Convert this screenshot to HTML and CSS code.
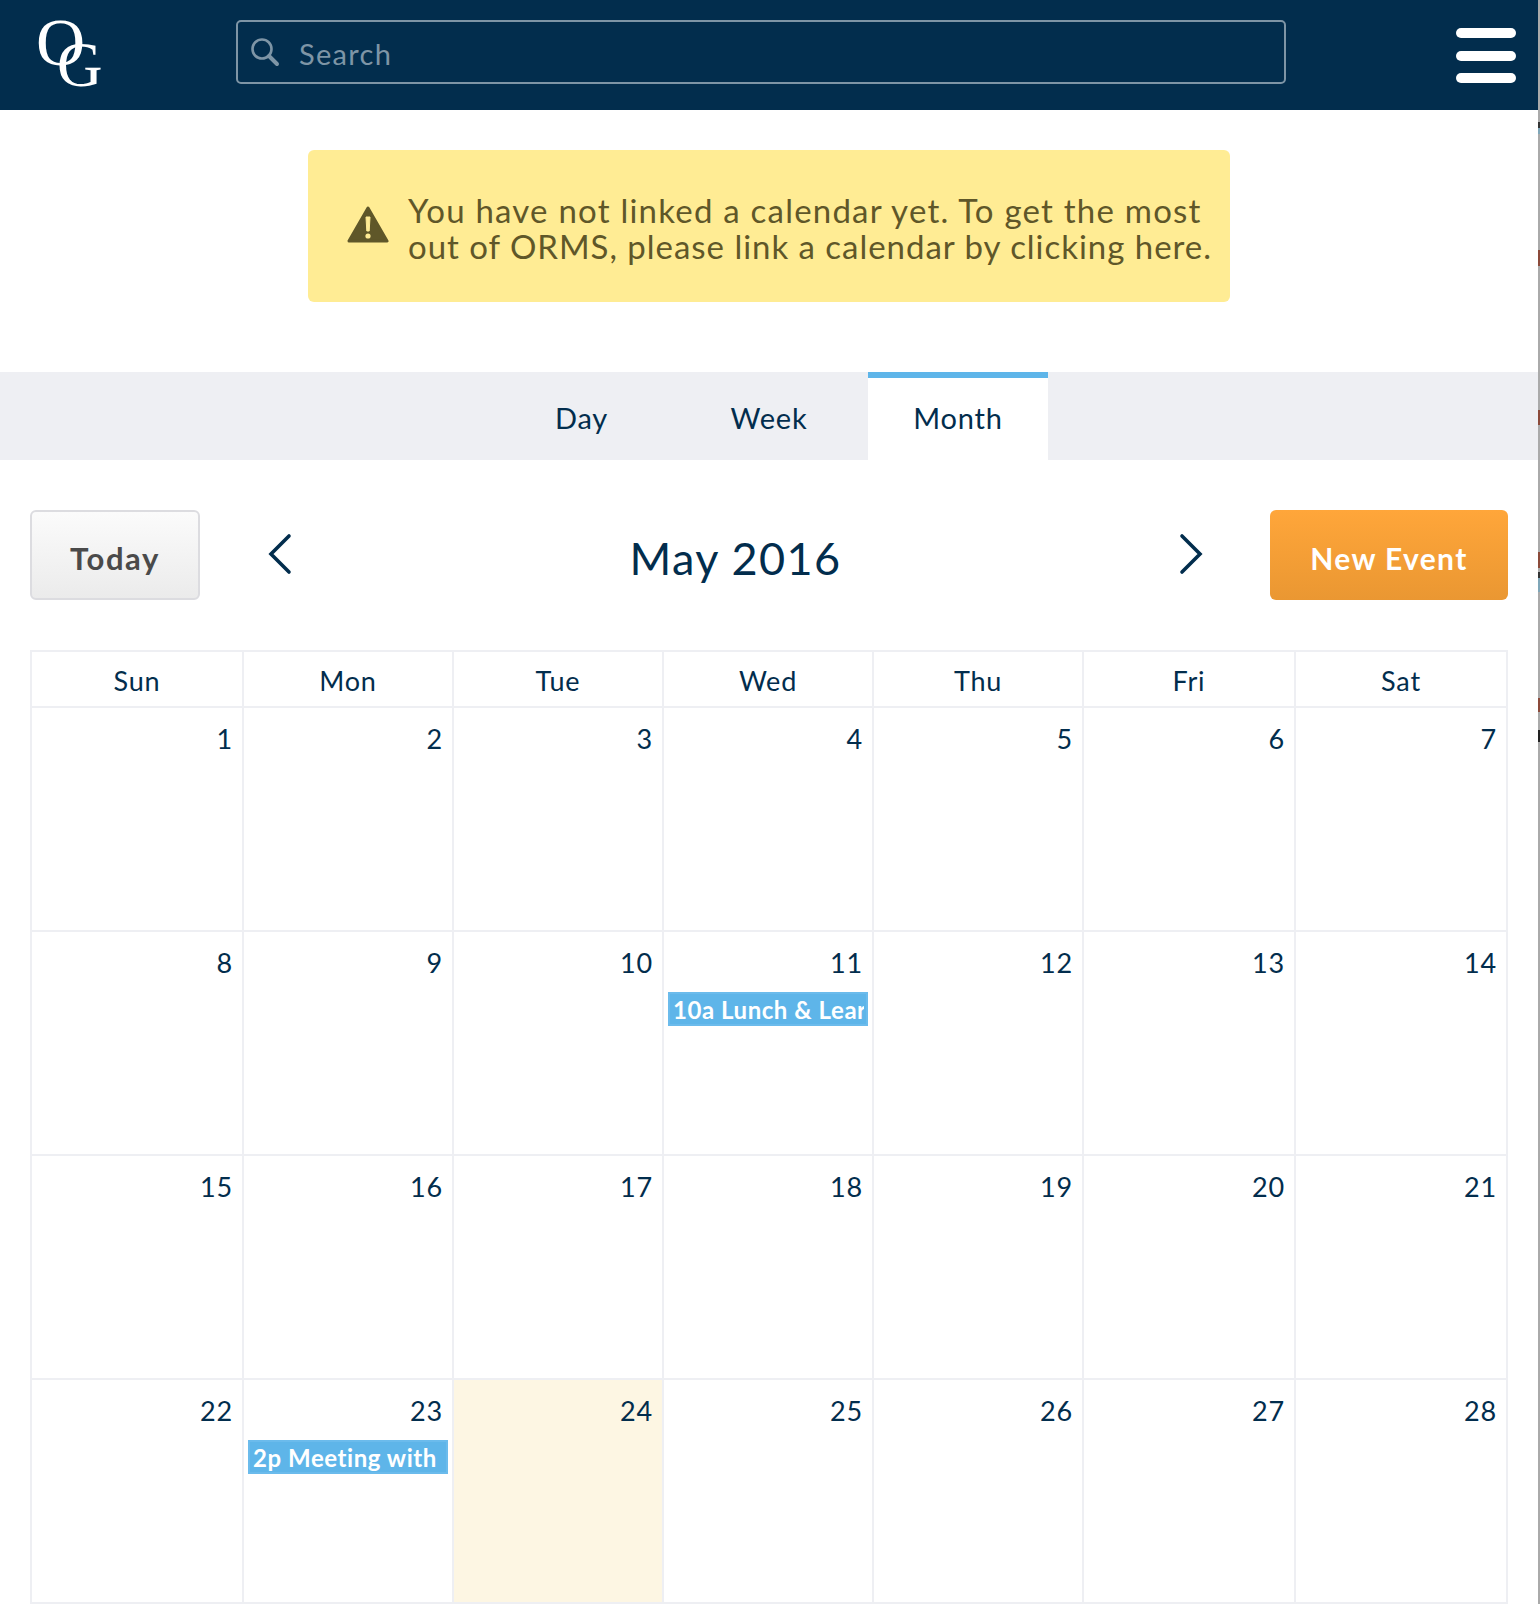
FILE: index.html
```html
<!DOCTYPE html>
<html>
<head>
    <meta charset="UTF-8">
    <title>ORMS Calendar</title>
    <link rel="stylesheet" href="styles.css">
</head>
<body>
<div class="page">
    <header class="topbar">
        <div class="logo"><span class="logo-o">O</span><span class="logo-g">G</span></div>
        <div class="search">
            <svg class="search-icon" viewBox="0 0 30 30" width="30" height="30">
                <circle cx="12" cy="12" r="9.5" fill="none" stroke="#7e95a6" stroke-width="2.6"/>
                <path d="M19 19l8 8" fill="none" stroke="#7e95a6" stroke-width="4" stroke-linecap="round"/>
            </svg>
            <span class="search-text">Search</span>
        </div>
        <div class="burger"><i></i><i></i><i></i></div>
    </header>

    <div class="alert-wrap">
        <div class="alert">
            <svg class="alert-icon" viewBox="0 0 42 38" width="42" height="38">
                <path d="M21 2L40 35H2z" fill="#5f5729" stroke="#5f5729" stroke-width="3" stroke-linejoin="round"/>
                <path d="M19 11h4l-.8 14h-2.4z" fill="#ffec94" stroke="#ffec94" stroke-linejoin="round"/>
                <circle cx="21" cy="30" r="2.6" fill="#ffec94"/>
            </svg>
            <p><span class="line-one">You have not linked a calendar yet. To get the most</span><span class="line-two">out of ORMS, please link a calendar by clicking here.</span></p>
        </div>
    </div>

    <nav class="tabs">
        <a class="tab tab-day">Day</a>
        <a class="tab tab-week">Week</a>
        <a class="tab tab-month active">Month</a>
    </nav>

    <div class="cal-head">
        <button class="btn-today">Today</button>
        <svg class="arrow arrow-left" viewBox="0 0 26 42" width="26" height="42"><path d="M22 3L4 21l18 18" fill="none" stroke="#022d4d" stroke-width="3.6" stroke-linecap="round"/></svg>
        <h1 class="cal-title">May 2016</h1>
        <svg class="arrow arrow-right" viewBox="0 0 26 42" width="26" height="42"><path d="M4 3l18 18L4 39" fill="none" stroke="#022d4d" stroke-width="3.6" stroke-linecap="round"/></svg>
        <button class="btn-new">New Event</button>
    </div>

    <div class="calendar">
        <div class="dow">Sun</div><div class="dow">Mon</div><div class="dow">Tue</div><div class="dow">Wed</div><div class="dow">Thu</div><div class="dow">Fri</div><div class="dow">Sat</div>

        <div class="day">1</div><div class="day">2</div><div class="day">3</div><div class="day">4</div><div class="day">5</div><div class="day">6</div><div class="day">7</div>

        <div class="day">8</div><div class="day">9</div><div class="day">10</div>
        <div class="day">11<div class="event"><span>10a Lunch &amp; Learn</span></div></div>
        <div class="day">12</div><div class="day">13</div><div class="day">14</div>

        <div class="day">15</div><div class="day">16</div><div class="day">17</div><div class="day">18</div><div class="day">19</div><div class="day">20</div><div class="day">21</div>

        <div class="day">22</div>
        <div class="day">23<div class="event"><span>2p Meeting with</span></div></div>
        <div class="day today">24</div>
        <div class="day">25</div><div class="day">26</div><div class="day">27</div><div class="day">28</div>
    </div>
</div>
<div class="window-edge"></div>
</body>
</html>
```

FILE: styles.css
```css
html, body {
    margin: 0;
    padding: 0;
    background-color: white;
}

body {
    font-family: Lato, "Open Sans", sans-serif;
    color: #022d4d;
    height: 1604px;
    overflow: hidden;
    display: flex;
}

.page {
    width: 1538px;
    flex: none;
}

/* sliver of the window behind, on the right edge */
.window-edge {
    width: 2px;
    height: 1604px;
    flex: none;
    background: linear-gradient(#aaa 0 122px, #333 122px 128px, #7fa6b8 128px 134px, #aaa 134px 250px, #8b4a3a 250px 266px, #aaa 266px 410px, #8b4a3a 410px 425px, #aaa 425px 552px, #8b4a3a 552px 568px, #aaa 568px 572px, #333 572px 578px, #7fa6b8 578px 592px, #aaa 592px 698px, #8b4a3a 698px 712px, #aaa 712px 730px, #222 730px 742px, #aaa 742px);
}

.topbar {
    height: 110px;
    background-color: #022d4d;
    display: flex;
    align-items: flex-start;
}

.logo {
    position: relative;
    width: 236px;
    height: 110px;
    font-family: "Liberation Serif", serif;
    color: white;
    flex: none;
}

.logo-o {
    position: absolute;
    left: 36px;
    top: 3px;
    font-size: 68px;
    line-height: 78px;
}

.logo-g {
    position: absolute;
    left: 57px;
    top: 31px;
    font-size: 63px;
    line-height: 68px;
}

.search {
    width: 1050px;
    height: 64px;
    margin-top: 20px;
    box-sizing: border-box;
    border: 2px solid #7e95a6;
    border-radius: 5px;
    display: flex;
    align-items: center;
    padding-left: 12px;
    flex: none;
}

.search-text {
    margin-left: 19px;
    font-size: 29px;
    letter-spacing: 1.3px;
    color: #7e95a6;
    padding-top: 2px;
}

.burger {
    margin: 28px 0 0 170px;
    width: 60px;
    display: flex;
    flex-direction: column;
    gap: 12.5px;
}

.burger i {
    display: block;
    height: 10px;
    background-color: white;
    border-radius: 5px;
}

.alert-wrap {
    height: 262px;
    padding-top: 40px;
    box-sizing: border-box;
}

.alert {
    width: 922px;
    height: 152px;
    margin-left: 308px;
    background-color: #ffec94;
    border-radius: 6px;
    display: flex;
    align-items: center;
    color: #5f5729;
    box-sizing: border-box;
    padding-left: 39px;
}

.alert-icon {
    flex: none;
    margin-top: -2px;
}

.alert p {
    margin: 3px 0 0 19px;
    font-size: 33px;
    line-height: 36px;
    white-space: nowrap;
}

.line-one, .line-two {
    display: block;
}

.line-one {
    letter-spacing: 1.22px;
}

.line-two {
    letter-spacing: 0.97px;
}

.tabs {
    height: 88px;
    background-color: #eeeff3;
    display: flex;
    padding-left: 510px;
}

.tab {
    box-sizing: border-box;
    display: flex;
    align-items: center;
    justify-content: center;
    font-size: 29px;
    letter-spacing: 0.8px;
    padding-top: 2px;
}

.tab-day {
    width: 143px;
}

.tab-week {
    width: 215px;
    padding-left: 17px;
}

.tab-month {
    width: 180px;
}

.tab.active {
    background-color: white;
    border-top: 6px solid #5eb5e9;
    padding-top: 0;
    padding-bottom: 4px;
}

.cal-head {
    display: flex;
    align-items: flex-start;
    padding: 50px 30px 0;
    height: 190px;
    box-sizing: border-box;
}

.btn-today {
    width: 170px;
    height: 90px;
    border: 2px solid #dcdce0;
    border-radius: 6px;
    background: linear-gradient(#fbfbfb, #ebebeb);
    font-family: inherit;
    font-size: 31px;
    font-weight: 700;
    letter-spacing: 1.6px;
    color: #4a4a4a;
    padding: 6px 0 0;
}

.arrow {
    flex: none;
    margin-top: 23px;
}

.arrow-left {
    margin-left: 67px;
}

.cal-title {
    margin: 21px 0 0;
    width: 885px;
    text-align: center;
    font-size: 45px;
    font-weight: 400;
    line-height: 54px;
    letter-spacing: 1.4px;
}

.btn-new {
    width: 238px;
    height: 90px;
    margin-left: 66px;
    border: none;
    border-radius: 6px;
    background: linear-gradient(#ffa63a, #ea9732);
    font-family: inherit;
    font-size: 30px;
    font-weight: 700;
    letter-spacing: 1.35px;
    color: white;
    padding: 6px 0 0;
    flex: none;
}

.calendar {
    margin-left: 30px;
    width: 1478px;
    display: grid;
    grid-template-columns: 212px 210px 210px 210px 210px 212px 212px;
    grid-template-rows: 56px repeat(4, 224px);
    box-sizing: border-box;
    border-top: 2px solid #eeeff3;
    border-left: 2px solid #eeeff3;
}

.dow, .day {
    border-right: 2px solid #eeeff3;
    border-bottom: 2px solid #eeeff3;
    font-size: 27px;
    letter-spacing: 0.8px;
    box-sizing: border-box;
}

.dow {
    text-align: center;
    line-height: 57px;
}

.day {
    text-align: right;
    padding: 15px 9px 0 4px;
    line-height: 32px;
}

.day.today {
    background-color: #fdf6e3;
}

.event {
    margin: 13px -5px 0 0;
    height: 34px;
    box-sizing: border-box;
    background-color: #5eb5e9;
    border: 2px solid #6bbbec;
    padding: 0 2px;
    text-align: left;
    color: white;
    font-size: 24px;
    font-weight: 700;
    letter-spacing: 0.55px;
    line-height: 31px;
}

.event span {
    display: block;
    overflow: hidden;
    white-space: nowrap;
    padding-left: 1px;
}
```
